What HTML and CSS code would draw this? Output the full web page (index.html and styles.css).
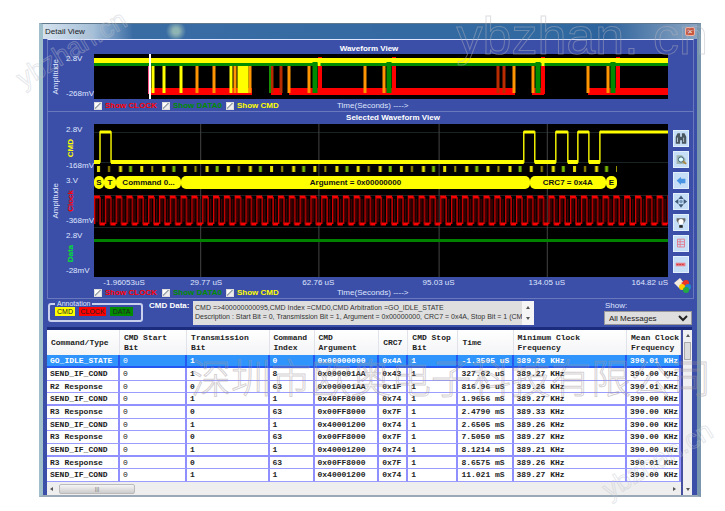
FILE: index.html
```html
<!DOCTYPE html>
<html lang="en">
<head>
<meta charset="utf-8">
<title>Detail View</title>
<link rel="stylesheet" href="styles.css">
</head>
<body>
<main class="window">
  <header class="titlebar">
    <span class="tab">Detail View</span>
    <button class="close" aria-label="Close">×</button>
  </header>
  <div class="client">
    <section class="panel overview">
      <h2>Waveform View</h2>
      <div class="amp"><span>Amplitude</span></div>
      <div class="scale"><span>2.8V</span><span>-268mV</span></div>
      <svg class="plot" viewBox="0 0 574 45" preserveAspectRatio="none" aria-label="Waveform overview">
        <g stroke="#f00" stroke-width="7">
          <path d="M57 37.500H158M177 37.500H188M195 37.500H421M438 37.500H450M494 37.500H574"/>
        </g>
        <g stroke-width="3">
          <path stroke="#ff0" d="M59 10V39M70 10V39M87 10V39M137 10V39"/>
          <path stroke="#ff9500" d="M103 10V39M120 10V39M141 10V39M156 10V39M195 10V39M215 10V39M271 10V39M290 10V39M420 10V39M439 10V39M494 10V39M514 10V39"/>
          <path stroke="#b82c00" d="M178 10V39M187 10V39M404 10V39M410 10V39"/>
          <path stroke="#f00" stroke-width="4" d="M226 3V40M300 3V40M449 3V40M524 3V40"/>
          <path stroke="#189000" stroke-width="2" d="M176 10V39"/>
          <path stroke="#ff0" stroke-width="11" d="M149 10V39"/>
        </g>
        <path stroke="#ff0" stroke-width="5" d="M0 6.500H574"/>
        <path stroke="#008c00" stroke-width="3" d="M0 10.500H574"/>
        <path stroke="#ff0" stroke-width="3" d="M225 5V12M449 5V12"/>
        <path stroke="#008c00" stroke-width="5" d="M221 8V39M295 8V39M444 8V39M519 8V39"/>
        <path stroke="#f58" stroke-width="2" d="M55 12V40"/>
        <path stroke="#fff" stroke-width="2" d="M56 0V45"/>
      </svg>
      <div class="legend">
        <label class="red"><input type="checkbox" checked>Show CLOCK</label>
        <label class="green"><input type="checkbox" checked>Show DATA0</label>
        <label class="yellow"><input type="checkbox" checked>Show CMD</label>
        <span>Time(Seconds) ----&gt;</span>
      </div>
    </section>

    <section class="panel detail">
      <h2>Selected Waveform View</h2>
      <div class="amp"><span>Amplitude</span></div>
      <div class="scale">
        <span>2.8V</span><b class="yellow">CMD</b><span>-168mV</span>
        <span>3.V</span><b class="red">Clock</b><span>-368mV</span>
        <span>2.8V</span><b class="lime">Data</b><span>-28mV</span>
      </div>
      <div class="stage">
        <svg class="plot" viewBox="0 0 573 153" preserveAspectRatio="none" aria-label="Selected waveform">
          <defs>
            <pattern id="clock" width="10.800" height="34" patternUnits="userSpaceOnUse" y="70">
              <path d="M0 3H6M5.500 30H11" stroke="#f00" stroke-width="3"/>
              <path d="M.7 3V30M6 3V30" stroke="#d80000" stroke-width="1.400"/>
              <path d="M3 5V28M8.500 5V28" stroke="#500000" stroke-width="1.400"/>
            </pattern>
            <pattern id="bits" width="43.200" height="6" patternUnits="userSpaceOnUse" y="42">
              <path d="M3 0h3v6H3zM25 0h3v6h-3z" fill="#e8e000"/>
              <path d="M14 0h2v6h-2z" fill="#a09000"/>
              <path d="M35 0h3v6h-3z" fill="#78b800"/>
            </pattern>
          </defs>
          <path d="M0 8.500H573M0 38.500H573M0 71.500H573M0 103.500H573" stroke="#192323"/>
          <path d="M106.500 0V153M224.500 0V153M344.500 0V153M452.500 0V153" stroke="#444"/>
          <path d="M0 38H6V8H17V38H429V8H440V38H461V8H473V38H483V8H494V38H505V8H573" fill="none" stroke="#ee0" stroke-width="1.500"/>
          <path d="M0 38H6M17 38H429M440 38H461M473 38H483M494 38H505" stroke="#ff0" stroke-width="4"/>
          <path d="M6 8H17M429 8H440M461 8H473M483 8H494M505 8H573" stroke="#ff0" stroke-width="3"/>
          <rect x="0" y="42" width="522" height="6" fill="url(#bits)"/>
          <rect x="0" y="70" width="573" height="34" fill="url(#clock)"/>
          <path d="M0 116.500H573" stroke="#008200" stroke-width="3"/>
        </svg>
        <div class="decode">
          <span>S</span><span>T</span><span>Command 0...</span><span>Argument = 0x00000000</span><span>CRC7 = 0x4A</span><span>E</span>
        </div>
      </div>
      <div class="tools">
        <button aria-label="Find"><svg viewBox="0 0 16 16"><path d="M2 6l2-4h3v12H2zM9 2h3l2 4v8H9zM6 6h4v4H6z" fill="#4a5660"/><path d="M4 7v5M11 7v5" stroke="#bcd"/></svg></button>
        <button aria-label="Zoom"><svg viewBox="0 0 16 16"><path d="M3 3h6l4 4v6H3z" fill="#9fb5ae"/><circle cx="8" cy="8" r="3" fill="#dff" stroke="#357"/><path d="M10 10l4 3" stroke="#a84" stroke-width="2"/></svg></button>
        <button aria-label="Back"><svg viewBox="0 0 16 16"><path d="M3 8l5-4v2h5v5H8v2z" fill="#4a94e4"/></svg></button>
        <button aria-label="Fit"><svg viewBox="0 0 16 16"><path d="M1 8l4-3v6zM15 8l-4-3v6zM8 1l3 4H5zM8 15l3-4H5z" fill="#3d5878"/><circle cx="8" cy="8" r="2" fill="#79b"/></svg></button>
        <button aria-label="Save picture"><svg viewBox="0 0 16 16"><path d="M3 3h10v3l-2 3H5L3 6z" fill="#666"/><circle cx="8" cy="7" r="3" fill="#fff"/><path d="M6 11h4v3H6z" fill="#222"/></svg></button>
        <button aria-label="Report"><svg viewBox="0 0 16 16"><path d="M4 3h8v9H4zM4 6h8M4 9h8M7 3v9" fill="none" stroke="#e4778a"/></svg></button>
        <button aria-label="Marker"><svg viewBox="0 0 16 16"><path d="M2 6h11v4H2z" fill="#e87a84"/><path d="M3 8h9" stroke="#c33" stroke-dasharray="2 1"/></svg></button>
      </div>
      <div class="axis"><span>-1.96053uS</span><span>29.77 uS</span><span>62.76 uS</span><span>95.03 uS</span><span>134.05 uS</span><span>164.82 uS</span></div>
      <button class="palette" aria-label="Colours"><svg viewBox="0 0 18 16"><path d="M1 6l6-5 4 5-5 5z" fill="#f4ecdf"/><path d="M8 6l4-2v5z" fill="#d33"/><circle cx="13" cy="6" r="3" fill="#e32"/><circle cx="9" cy="10" r="3" fill="#fc0"/><circle cx="15" cy="10" r="3" fill="#28c"/><circle cx="13" cy="13" r="3" fill="#2a4"/></svg></button>
      <div class="legend">
        <label class="red"><input type="checkbox" checked>Show CLOCK</label>
        <label class="green"><input type="checkbox" checked>Show DATA0</label>
        <label class="yellow"><input type="checkbox" checked>Show CMD</label>
        <span>Time(Seconds) ----&gt;</span>
      </div>
    </section>

    <section class="info">
      <fieldset><legend>Annotation</legend><span class="k1">CMD</span><span class="k2">CLOCK</span><span class="k3">DATA</span></fieldset>
      <label class="datalabel" for="data">CMD Data:</label>
      <div class="databox">
        <textarea id="data" readonly wrap="off">CMD =>400000000095,CMD Index =CMD0,CMD Arbitration =GO_IDLE_STATE
Description : Start Bit = 0, Transmission Bit = 1, Argument = 0x00000000, CRC7 = 0x4A, Stop Bit = 1 (CMD)</textarea>
        <div class="spin"><i class="up"></i><i class="down"></i></div>
      </div>
      <div class="show"><label for="show">Show:</label><select id="show"><option>All Messages</option></select></div>
    </section>

    <section class="grid">
      <div class="tablewrap">
        <table>
          <colgroup><col class="c1"><col class="c2"><col class="c3"><col class="c4"><col class="c5"><col class="c6"><col class="c7"><col class="c8"><col class="c9"><col class="c10"></colgroup>
          <thead><tr><th>Command/Type</th><th>CMD Start<br>Bit</th><th>Transmission<br>Bit</th><th>Command<br>Index</th><th>CMD<br>Argument</th><th>CRC7</th><th>CMD Stop<br>Bit</th><th>Time</th><th>Minimum Clock<br>Frequency</th><th>Mean Clock<br>Frequency</th></tr></thead>
          <tbody>
            <tr class="sel"><td>GO_IDLE_STATE</td><td>0</td><td>1</td><td>0</td><td>0x00000000</td><td>0x4A</td><td>1</td><td>-1.3505 uS</td><td>389.26 KHz</td><td>390.01 KHz</td></tr>
            <tr><td>SEND_IF_COND</td><td>0</td><td>1</td><td>8</td><td>0x000001AA</td><td>0x43</td><td>1</td><td>327.62 uS</td><td>389.27 KHz</td><td>390.00 KHz</td></tr>
            <tr><td>R2 Response</td><td>0</td><td>0</td><td>63</td><td>0x000001AA</td><td>0x1F</td><td>1</td><td>816.96 uS</td><td>389.26 KHz</td><td>390.01 KHz</td></tr>
            <tr><td>SEND_IF_COND</td><td>0</td><td>1</td><td>1</td><td>0x40FF8000</td><td>0x74</td><td>1</td><td>1.9656 mS</td><td>389.27 KHz</td><td>390.00 KHz</td></tr>
            <tr><td>R3 Response</td><td>0</td><td>0</td><td>63</td><td>0x00FF8000</td><td>0x7F</td><td>1</td><td>2.4790 mS</td><td>389.33 KHz</td><td>390.00 KHz</td></tr>
            <tr><td>SEND_IF_COND</td><td>0</td><td>1</td><td>1</td><td>0x40001200</td><td>0x74</td><td>1</td><td>2.6505 mS</td><td>389.26 KHz</td><td>390.00 KHz</td></tr>
            <tr><td>R3 Response</td><td>0</td><td>0</td><td>63</td><td>0x00FF8000</td><td>0x7F</td><td>1</td><td>7.5050 mS</td><td>389.27 KHz</td><td>390.00 KHz</td></tr>
            <tr><td>SEND_IF_COND</td><td>0</td><td>1</td><td>1</td><td>0x40001200</td><td>0x74</td><td>1</td><td>8.1214 mS</td><td>389.21 KHz</td><td>390.00 KHz</td></tr>
            <tr><td>R3 Response</td><td>0</td><td>0</td><td>63</td><td>0x00FF8000</td><td>0x7F</td><td>1</td><td>8.6575 mS</td><td>389.26 KHz</td><td>390.01 KHz</td></tr>
            <tr><td>SEND_IF_COND</td><td>0</td><td>1</td><td>1</td><td>0x40001200</td><td>0x74</td><td>1</td><td>11.021 mS</td><td>389.27 KHz</td><td>390.00 KHz</td></tr>
          </tbody>
        </table>
        <div class="hscroll"><i class="left"></i><div class="hthumb">|||</div><i class="right"></i></div>
      </div>
      <div class="vscroll"><i class="up"></i><div class="vthumb"></div><i class="down"></i></div>
    </section>
  </div>
</main>
<div class="mark big" aria-hidden="true">ybzhan. cn</div>
<div class="mark company" lang="zh-CN">深圳市欧奥电子科技有限公司</div>
<div class="mark small top" aria-hidden="true">ybzhan.cn</div>
<div class="mark small bottom" aria-hidden="true">ybzhan.cn</div>
</body>
</html>
```
FILE: styles.css
```css
* { box-sizing: border-box; }
body {
  margin: 0;
  padding: 23px 24px 14px 39px;
  position: relative;
  overflow: hidden;
  background: #fff;
  font: 8px/10px "Liberation Sans", sans-serif;
  color: #dfe5ff;
}
button { padding: 0; border: 0; font: inherit; }
.red { color: #f00; }
.green { color: #008c00; }
.yellow { color: #ff0; }
.lime { color: #00e030; }

.window {
  border: solid;
  border-width: 1px 4px 2px;
  border-color: #61798c #7896ae #9aa9b5 #9fbfca;
}
.titlebar {
  height: 15px;
  display: flex;
  align-items: center;
  justify-content: space-between;
  background:
    radial-gradient(circle at 133px 7px, #8fb4b4 3px, transparent 10px),
    radial-gradient(ellipse at 90px 3px, #88a0a8 3px, transparent 14px),
    linear-gradient(90deg, #d5e2ee, #a6c0d8 50px, #3a6ca4 90px, #3069a0 80%, #2d629c 86%, #8aa5c2);
}
.tab { padding-left: 2px; font-size: 8px; color: #222; }
.close {
  width: 10px; height: 9px; margin-right: 2px;
  border: 1px solid #f0b5a4; border-radius: 2px;
  background: #c8553e; color: #fff; line-height: 7px;
}
.client { background: #3c4fa8; padding: 0 3px 0 4px; }

.panel {
  display: grid;
  grid-template-columns: 16px 30px minmax(0, 1fr) 25px;
  border: 1px solid #6a79be;
  border-top: 0;
}
.overview { grid-template-rows: 14px 45px 12px; border-top-width: 1px; border-top-style: solid; }
.detail { grid-template-rows: 12px 153px 11px 10px; }
.panel h2 {
  grid-column: 3; margin: 0;
  font-size: 8px; line-height: 12px; text-align: center; color: #fff;
}
.overview h2 { padding-right: 24px; line-height: 18px; }
.detail h2 { padding-left: 24px; }
.amp { grid-column: 1; display: flex; align-items: center; justify-content: center; }
.amp span, .scale b { writing-mode: vertical-rl; transform: rotate(180deg); }
.scale { grid-column: 2; display: flex; flex-direction: column; justify-content: space-between; align-items: flex-start; padding-left: 2px; white-space: nowrap; }
.detail .scale span { line-height: 12px; }
.plot { display: block; width: 100%; height: 100%; background: #000; }
.overview .plot { grid-column: 3; }
.stage { grid-column: 3; position: relative; min-width: 0; }
.decode {
  position: absolute; left: 0; right: 0; top: 52px;
  display: grid;
  grid-template-columns: 10fr 12fr 65fr 348fr 76fr 11fr 51fr;
  color: #111; text-align: center; line-height: 13px; font-weight: bold;
}
.decode span { height: 13px; background: #ff0; border-radius: 5px; white-space: nowrap; }
.tools { grid-column: 4; display: flex; flex-direction: column; gap: 4px; padding: 6px 5px; }
.tools button { width: 16px; height: 17px; background: #c6def6; border: 1px solid #e2effc; }
.tools svg { display: block; width: 14px; height: 15px; }
.axis { grid-column: 3; display: grid; grid-template-columns: 60fr 104fr 120fr 120fr 96fr 73fr; text-align: center; line-height: 12px; }
.axis :last-child { text-align: right; }
.palette { grid-column: 4; grid-row: 3 / 5; width: 18px; height: 16px; margin: 0 0 0 5px; background: none; }
.palette svg { display: block; width: 18px; height: 16px; }
.legend { grid-column: 3; display: grid; grid-template-columns: 68px 64px 111px auto; align-items: center; }
.overview .legend { padding-top: 2px; }
.legend label { display: flex; align-items: center; gap: 3px; font-weight: bold; white-space: nowrap; }
.legend input {
  appearance: none; width: 8px; height: 8px; margin: 0; flex: none;
  background: linear-gradient(135deg, #fff 35%, #7a8590 45%, #eee 60%);
  border: 1px solid #ddd;
}

.info { display: flex; height: 28px; padding-top: 2px; align-items: flex-start; }
fieldset {
  width: 95px; height: 21px; margin: 0 6px 0 1px; padding: 0 5px 2px;
  border: 2px solid #c9d1ef; border-radius: 3px;
  display: flex; gap: 4px;
}
legend { font-size: 7px; line-height: 6px; padding: 0 2px; }
fieldset span { height: 9px; font-size: 7px; line-height: 9px; text-align: center; color: #222; }
.k1 { width: 20px; background: #ff0; }
.k2 { width: 27px; background: #f00; }
.k3 { width: 23px; background: #008c00; }
.datalabel { width: 44px; font-weight: bold; color: #fff; white-space: nowrap; }
.databox { flex: 1; display: flex; height: 24px; background: #dedede; min-width: 0; }
.databox textarea {
  flex: 1; min-width: 0; height: 24px; border: 0; padding: 2px 2px; resize: none; overflow: hidden;
  background: #dedede; color: #333; font: 7px/9px "Liberation Sans", sans-serif;
}
.spin { width: 12px; background: #f5f5f5; display: flex; flex-direction: column; align-items: center; justify-content: space-between; padding: 5px 0; }
i.up, i.down, i.left, i.right { border: 2px solid transparent; flex: none; }
i.up { border-top: 0; border-bottom: 3px solid #555; }
i.down { border-bottom: 0; border-top: 3px solid #555; }
i.left { border-left: 0; border-right: 3px solid #555; }
i.right { border-right: 0; border-left: 3px solid #555; }
.show { margin: 0 2px 0 70px; width: 88px; display: flex; flex-direction: column; }
.show label { padding-left: 1px; }
.show select {
  width: 100%; height: 14px; padding: 0; border: 1px solid #999;
  background: #dedede; color: #222; font: 8px/10px "Liberation Sans", sans-serif;
}

.grid { display: flex; border-top: 3px solid #1c2c7c; margin-right: 2px; background: #fff; }
.tablewrap { flex: 1; min-width: 0; overflow: hidden; }
table { width: 100%; border-collapse: separate; border-spacing: 0; table-layout: fixed; color: #222; font-family: "Liberation Mono", monospace; }
th {
  height: 25px; padding: 0 0 0 4px; text-align: left; vertical-align: middle;
  border-right: 1px solid #e2e2ea; background: linear-gradient(#fff, #f3f4f6);
  font: bold 8px/10px "Liberation Mono", monospace; white-space: nowrap;
}
td {
  height: 13px; padding: 0 0 0 3px; border-right: 2px solid #8f8fff; border-bottom: 1px solid #9c9cff;
  font-size: 8px; line-height: 10px; font-weight: bold; white-space: nowrap;
}
td:nth-child(2) { font-weight: normal; }
tr:nth-child(3n) td { height: 12px; }
tr:nth-child(4n) td { border-bottom: 2px solid #9090ff; }
.sel td { background: #2f94fb; color: #fff; border-right-color: #2558f0; border-bottom: 2px solid #2558f0; }
.c1 { width: 11.5%; }
.c2 { width: 10.6%; }
.c3 { width: 13%; }
.c4 { width: 7.1%; }
.c5 { width: 10.2%; }
.c6 { width: 4.6%; }
.c7 { width: 7.9%; }
.c8 { width: 8.7%; }
.c9 { width: 17.9%; }
.c10 { width: 8.5%; }
.hscroll { height: 13px; display: flex; align-items: center; padding: 0 5px 0 3px; background: #eee; }
.hscroll .right { margin-left: auto; }
.hthumb { width: 76px; height: 10px; margin-left: 6px; border: 1px solid #bbb; border-radius: 2px; background: linear-gradient(#f5f5f5, #ccc); text-align: center; color: #777; font-size: 6px; line-height: 8px; }
.vscroll { width: 11px; display: flex; flex-direction: column; align-items: center; padding: 4px 0; background: #f0f0f2; border-left: 2px solid #4550a0; }
.vthumb { width: 7px; height: 18px; margin-top: 5px; border: 1px solid #aaa; background: #ddd; }
.vscroll .down { margin-top: auto; }

.mark { position: absolute; pointer-events: none; white-space: nowrap; color: transparent; }
.big { right: 17px; top: 6px; font: 52px/60px "Liberation Sans", sans-serif; -webkit-text-stroke: 1px rgba(180, 180, 190, .45); }
.company { right: 14px; top: 349px; font: 40px/54px "Noto Sans CJK SC", sans-serif; font-weight: 300; -webkit-text-stroke: 1px rgba(160, 150, 155, .45); }
.small { font: 27px/30px "Liberation Sans", sans-serif; -webkit-text-stroke: 1px rgba(190, 195, 205, .4); transform: rotate(-31deg); }
.top { left: 10px; top: 34px; }
.bottom { right: 6px; top: 445px; }
```
